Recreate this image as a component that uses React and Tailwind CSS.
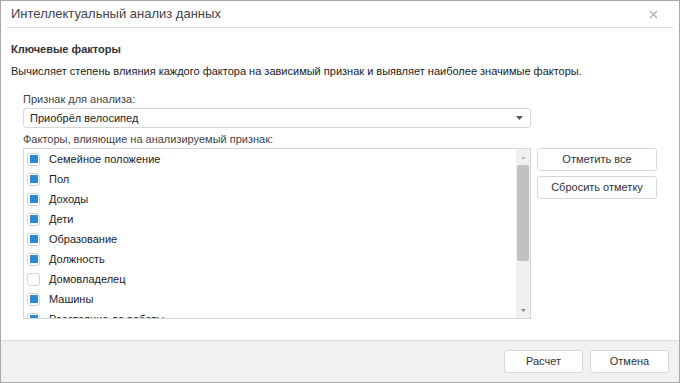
import React from 'react'

const factors = [
  { name: 'Семейное положение', on: true },
  { name: 'Пол', on: true },
  { name: 'Доходы', on: true },
  { name: 'Дети', on: true },
  { name: 'Образование', on: true },
  { name: 'Должность', on: true },
  { name: 'Домовладелец', on: false },
  { name: 'Машины', on: true },
  { name: 'Расстояние до работы', on: true },
]

function Check({ on }) {
  return (
    <span className="w-[13px] h-[13px] rounded-[3px] border border-[#d4d4d4] bg-white flex items-center justify-center shrink-0">
      {on && <span className="w-[8px] h-[8px] bg-[#2a8ad4]" />}
    </span>
  )
}

function Btn({ children, className = '' }) {
  return (
    <button className={`h-[23px] rounded-[3px] border border-[#d7d7d7] bg-white text-[11px] text-[#333] ${className}`}>
      {children}
    </button>
  )
}

export default function App() {
  return (
    <div className="w-[680px] h-[383px] bg-white border border-[#a9a9a9] flex flex-col text-[#333]" style={{ fontFamily: '"Liberation Sans", Arial, sans-serif' }}>
      {/* Header */}
      <div className="h-[27px] mx-[6px] border-b border-[#dcdcdc] flex items-center justify-between pl-[4px] pr-[15px]">
        <span className="text-[13px] text-[#444]">Интеллектуальный анализ данных</span>
        <svg width="9" height="9" viewBox="0 0 9 9" className="text-[#aaa]">
          <path d="M1 1L8 8M8 1L1 8" stroke="currentColor" strokeWidth="1.1" />
        </svg>
      </div>

      {/* Body */}
      <div className="flex-1 px-[10px] pt-[13px]">
        <div className="text-[11px] font-bold leading-[16px]">Ключевые факторы</div>
        <div className="text-[11px] leading-[16px] mt-[6px] text-[#222]">
          Вычисляет степень влияния каждого фактора на зависимый признак и выявляет наиболее значимые факторы.
        </div>

        <div className="pl-[12px] mt-[13px]">
          <div className="text-[11px] leading-[14px] text-[#444]">Признак для анализа:</div>
          <div className="w-[508px] h-[20px] mt-[2px] border border-[#d7d7d7] rounded-[3px] flex items-center justify-between pl-[6px] pr-[7px]">
            <span className="text-[11px] text-[#222]">Приобрёл велосипед</span>
            <svg width="7" height="4" viewBox="0 0 7 4"><path d="M0 0H7L3.5 4Z" fill="#555" /></svg>
          </div>

          <div className="text-[11px] leading-[14px] mt-[4px] text-[#444]">Факторы, влияющие на анализируемый признак:</div>
          <div className="flex gap-[6px] mt-[2px]">
            <div className="w-[508px] h-[171px] border border-[#d7d7d7] flex overflow-hidden">
              <div className="flex-1 overflow-hidden">
                {factors.map(f => (
                  <div key={f.name} className="h-[20px] flex items-center pl-[3px] gap-[9px]">
                    <Check on={f.on} />
                    <span className="text-[11px] text-[#222]">{f.name}</span>
                  </div>
                ))}
              </div>
              <div className="w-[14px] bg-[#f0f0f0] flex flex-col items-center">
                <svg width="5" height="3" viewBox="0 0 5 3" className="mt-[7px]"><path d="M0 3H5L2.5 0Z" fill="#bbb" /></svg>
                <div className="w-[12px] h-[96px] bg-[#c1c1c1] rounded-[2px] mt-[6px]" />
                <div className="flex-1" />
                <svg width="5" height="3" viewBox="0 0 5 3" className="mb-[6px]"><path d="M0 0H5L2.5 3Z" fill="#888" /></svg>
              </div>
            </div>
            <div className="flex flex-col gap-[5px]">
              <Btn className="w-[120px]">Отметить все</Btn>
              <Btn className="w-[120px]">Сбросить отметку</Btn>
            </div>
          </div>
        </div>
      </div>

      {/* Footer */}
      <div className="h-[42px] bg-[#f1f1f1] border-t border-[#dcdcdc] flex items-center justify-end gap-[7px] pr-[10px]">
        <Btn className="w-[79px]">Расчет</Btn>
        <Btn className="w-[79px]">Отмена</Btn>
      </div>
    </div>
  )
}
